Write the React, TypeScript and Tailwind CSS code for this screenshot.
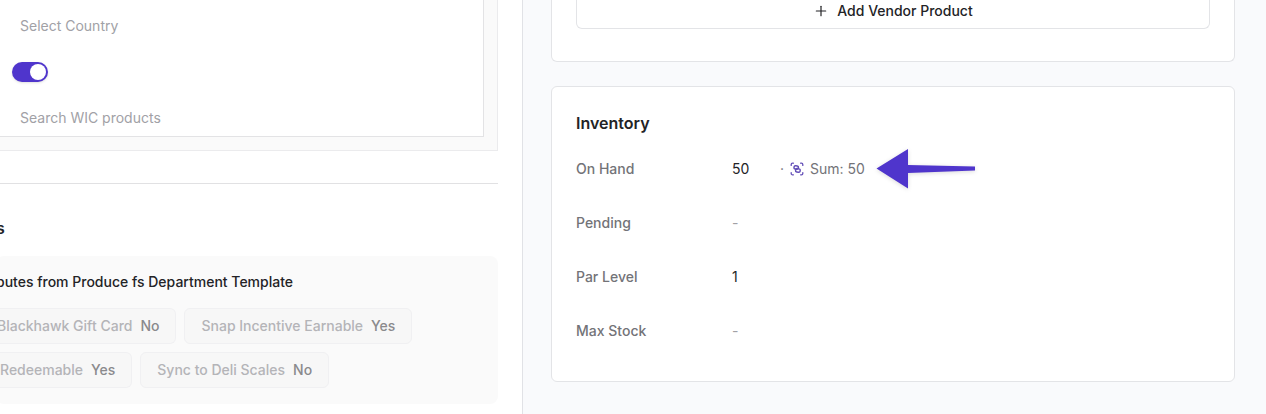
import React, { useState } from 'react';
import { Plus } from 'lucide-react';

const STOCK_FIELDS = [
  { id: 'on-hand', label: 'On Hand', value: '50', sum: 50 },
  { id: 'pending', label: 'Pending', value: '' },
  { id: 'par-level', label: 'Par Level', value: '1' },
  { id: 'max-stock', label: 'Max Stock', value: '' },
];

const Chip: React.FC<{ label: string; value: string; cut?: string }> = ({ label, value, cut }) => (
  <div
    className={`flex h-9 items-center gap-2 border border-[#f0f0f2] bg-[#f7f7f7] pr-4 text-sm font-medium ${
      cut ? `rounded-r-md border-l-0 ${cut}` : 'rounded-md pl-4'
    }`}
  >
    <span className="text-[#b4b4b8]">{label}</span>
    <span className="text-[#8a8a8d]">{value}</span>
  </div>
);

const SumIcon = () => (
  <svg className="h-3.5 w-3.5 text-[#6450b8]" viewBox="0 0 14 14" fill="none" stroke="currentColor" strokeWidth="1.3" strokeLinecap="round">
    <path d="M1.2 3.4V2.6c0-.8.6-1.4 1.4-1.4h.8M10.6 1.2h.8c.8 0 1.4.6 1.4 1.4v.8M12.8 10.6v.8c0 .8-.6 1.4-1.4 1.4h-.8M3.4 12.8h-.8c-.8 0-1.4-.6-1.4-1.4v-.8" />
    <g strokeWidth="1.5">
      <rect x="4" y="3.8" width="4.4" height="3.4" rx="1.4" transform="rotate(10 6.2 5.5)" />
      <rect x="5.6" y="6.7" width="4.6" height="3.4" rx="1.4" transform="rotate(10 7.9 8.4)" />
    </g>
  </svg>
);

const Arrow = () => (
  <svg className="ml-[11px] h-10 w-[100px] text-[#4f35cc] drop-shadow-sm" viewBox="0 0 100 40" fill="currentColor">
    <path d="M0.5 19.5L32 0v16l67 1.6v3.8L32 24v15.5z" />
  </svg>
);

const App: React.FC = () => {
  const [wicEligible, setWicEligible] = useState(true);

  return (
    <div className="grid min-h-screen grid-cols-[523fr_743fr] overflow-hidden bg-white font-['Inter',sans-serif] text-[#232326]">
      {/* Left: product details */}
      <div className="min-w-0 border-r border-[#e1e2e6] pr-6">
        <div className="border-r border-b border-[#ebebed] bg-[#fafafa] pr-[13px] pb-[13px]">
          <div className="flex flex-col gap-2.5 border-r border-b border-[#e3e3e5] bg-white pt-2 pl-3">
            <input
              aria-label="Country"
              placeholder="Select Country"
              className="h-9 w-full px-2 pb-0.5 text-sm outline-none placeholder:text-[#a1a1a6]"
            />
            <div className="flex h-9 items-center">
              <button
                role="switch"
                aria-label="WIC eligible"
                aria-checked={wicEligible}
                onClick={() => setWicEligible(!wicEligible)}
                className={`flex h-5 w-9 items-center rounded-full px-0.5 shadow-sm ${
                  wicEligible ? 'justify-end bg-[#4f35cc]' : 'justify-start bg-gray-300'
                }`}
              >
                <span className="h-4 w-4 rounded-full bg-white" />
              </button>
            </div>
            <input
              aria-label="WIC products"
              placeholder="Search WIC products"
              className="h-9 w-full px-2 pb-0.5 text-sm outline-none placeholder:text-[#a1a1a6]"
            />
          </div>
        </div>

        <hr className="mt-8 border-[#e1e1e3]" />

        <div className="-ml-1 pt-8">
          <h2 className="mb-4 leading-6 font-semibold">s</h2>
          <div className="rounded-lg bg-[#fafafa] py-4 pr-4">
            <h3 className="text-sm font-medium">butes from Produce fs Department Template</h3>
            <div className="mt-4 flex flex-col gap-2">
              <div className="flex gap-2">
                <Chip label="Blackhawk Gift Card" value="No" cut="pl-px" />
                <Chip label="Snap Incentive Earnable" value="Yes" />
              </div>
              <div className="flex gap-2">
                <Chip label="Redeemable" value="Yes" cut="pl-1" />
                <Chip label="Sync to Deli Scales" value="No" />
              </div>
            </div>
          </div>
        </div>
      </div>

      {/* Right: vendors and stock */}
      <div className="min-w-0 bg-[#f9fafc] pr-[31px] pl-7">
        <section className="rounded-b-md border border-t-0 border-[#e3e4e7] bg-white px-6 pb-8">
          <button className="-mt-1.5 flex h-[35px] w-full items-center justify-center gap-2 rounded-b-md border border-t-0 border-[#e3e4e7] text-sm font-medium">
            <Plus className="h-4 w-4" strokeWidth={1.8} />
            Add Vendor Product
          </button>
        </section>

        <section className="mt-6 rounded-md border border-[#e3e4e7] bg-white px-6 py-[23px]">
          <h2 className="leading-[26px] font-semibold">Inventory</h2>
          <div className="mt-1.5">
            {STOCK_FIELDS.map((field) => (
              <div key={field.id} className="flex h-[54px] items-center text-sm">
                <label htmlFor={field.id} className="w-[156px] shrink-0 font-medium text-[#737378]">
                  {field.label}
                </label>
                <input
                  id={field.id}
                  defaultValue={field.value}
                  placeholder="-"
                  className="w-12 outline-none placeholder:text-[#a1a1a6]"
                />
                {field.sum !== undefined && (
                  <>
                    <span className="flex items-center text-[#737378]">
                      <span className="mr-1.5">·</span>
                      <SumIcon />
                      <span className="ml-1.5">Sum: {field.sum}</span>
                    </span>
                    <Arrow />
                  </>
                )}
              </div>
            ))}
          </div>
        </section>
      </div>
    </div>
  );
};

export default App;
